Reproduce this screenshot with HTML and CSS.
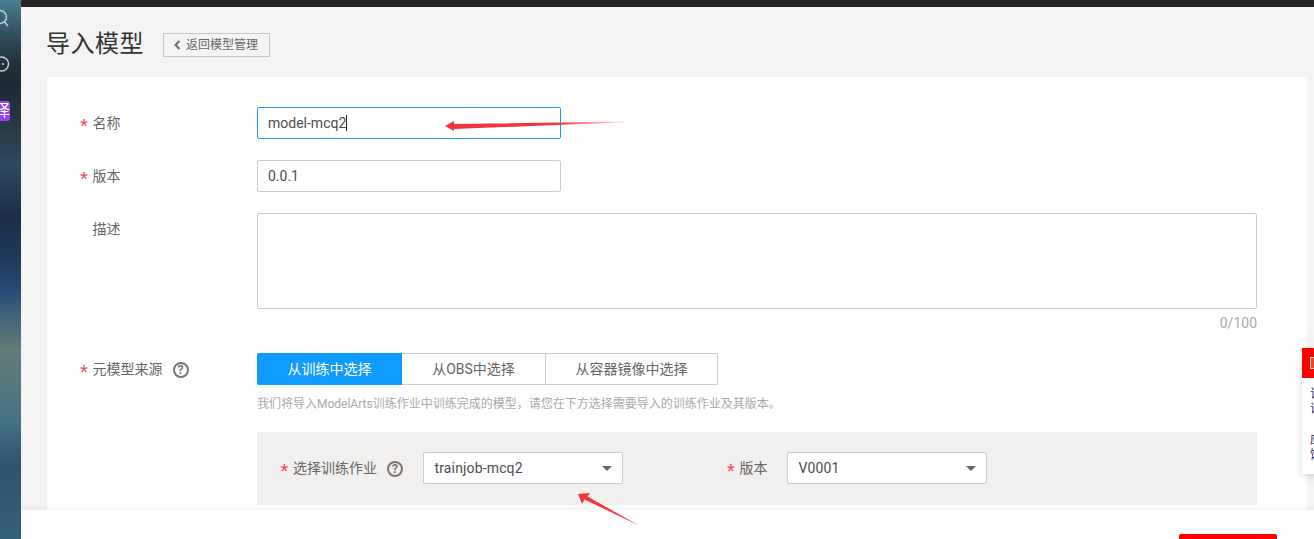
FILE: index.html
```html
<!DOCTYPE html>
<html lang="zh-CN">
<head>
<meta charset="utf-8">
<title>导入模型</title>
<link rel="stylesheet" href="styles.css">
</head>
<body>
<aside class="rail">
  <svg class="rail-icon search-icon" width="21" height="30" viewBox="0 0 21 30" aria-hidden="true">
    <circle cx="0" cy="17" r="6.5"/>
    <path d="M4.5 22 L8 26"/>
  </svg>
  <svg class="rail-icon clock-icon" width="21" height="18" viewBox="0 0 21 18" aria-hidden="true">
    <circle cx="1.5" cy="9" r="7"/>
    <circle class="dot" cx="3" cy="9" r="1"/>
  </svg>
  <div class="badge"><span>译</span></div>
</aside>
<div class="main">
  <div class="topbar"></div>
  <div class="content">
    <header class="page-head">
      <h1>导入模型</h1>
      <a class="back-btn"><svg width="7" height="10" viewBox="0 0 7 10" aria-hidden="true"><path d="M5.5 1 L1.5 5 L5.5 9"/></svg>返回模型管理</a>
    </header>
    <section class="card">
      <div class="row">
        <label class="label"><i class="star">*</i>名称</label>
        <div class="input focused">model-mcq2<span class="caret"></span></div>
      </div>
      <div class="row">
        <label class="label"><i class="star">*</i>版本</label>
        <div class="input">0.0.1</div>
      </div>
      <div class="row row-desc">
        <label class="label"><i class="star none"></i>描述</label>
        <div class="desc-wrap">
          <div class="textarea"></div>
          <div class="counter">0/100</div>
        </div>
      </div>
      <div class="row row-source">
        <label class="label"><i class="star">*</i>元模型来源<span class="help">?</span></label>
        <div class="source">
          <div class="tabs">
            <span class="tab tab-1 active">从训练中选择</span>
            <span class="tab tab-2">从OBS中选择</span>
            <span class="tab tab-3">从容器镜像中选择</span>
          </div>
          <p class="hint">我们将导入ModelArts训练作业中训练完成的模型，请您在下方选择需要导入的训练作业及其版本。</p>
          <div class="panel">
            <label class="label label-job"><i class="star">*</i>选择训练作业<span class="help">?</span></label>
            <div class="select">trainjob-mcq2<i class="tri"></i></div>
            <label class="label label-ver"><i class="star">*</i>版本</label>
            <div class="select">V0001<i class="tri"></i></div>
          </div>
        </div>
      </div>
    </section>
    <aside class="float-box">
      <div class="float-head"><i class="float-icon"></i></div>
      <div class="float-body">
        <p>该<br>议</p>
        <p>应<br>饭</p>
      </div>
    </aside>
  </div>
  <footer class="footer"><span class="primary-btn"></span></footer>
</div>
<svg class="marks" width="1314" height="539" viewBox="0 0 1314 539" aria-hidden="true">
  <defs>
    <linearGradient id="fade" gradientUnits="userSpaceOnUse" x1="445" y1="0" x2="625" y2="0">
      <stop offset="0" stop-color="#f5333a"/>
      <stop offset="0.6" stop-color="#f5333a"/>
      <stop offset="1" stop-color="#f5333a" stop-opacity="0.15"/>
    </linearGradient>
  </defs>
  <path fill="url(#fade)" d="M445 126 L454 121 L454 124 L625 121.5 L625 122.3 L454 129 L454 131 Z"/>
  <path fill="#f5333a" d="M578 494 L590 493 L587.5 496.5 L639 525.5 L584.5 499.5 L582 504 Z"/>
</svg>
</body>
</html>
```
FILE: styles.css
```css
* { box-sizing: border-box; }
html, body { margin: 0; height: 539px; }
body {
  display: flex;
  overflow: hidden;
  background: #fff;
  color: #666;
  font: 14px/20px Roboto, "Noto Sans CJK SC", sans-serif;
}
.rail {
  flex: 0 0 21px;
  height: 539px;
  overflow: hidden;
  display: flex;
  flex-direction: column;
  background: linear-gradient(180deg, #4b7f90 0, #3c6473 18px, #22333e 60px, #1a2a35 85px, #2a3b45 130px, #2c4a60 165px, #1c2e47 215px, #1f3a5c 260px, #254c73 290px, #3f6478 315px, #617b78 350px, #55797f 385px, #467385 420px, #2e5470 465px, #35607a 539px);
}
.rail-icon { fill: none; stroke: #c9d4d8; stroke-width: 1.4; display: block; flex: none; }
.clock-icon { margin-top: 25px; }
.clock-icon .dot { fill: #c9d4d8; stroke: none; }
.badge {
  flex: none;
  width: 10px;
  height: 20px;
  margin-top: 28px;
  overflow: hidden;
  background: #9d42f2;
  border-radius: 0 3px 3px 0;
  color: #fff;
  font-size: 16px;
  line-height: 20px;
}
.badge span { display: block; width: 16px; margin-left: -6px; }
.main {
  flex: 1;
  min-width: 0;
  height: 539px;
  display: flex;
  flex-direction: column;
}
.topbar { flex: 0 0 7px; background: #252525; }
.content {
  position: relative;
  flex: 0 0 503px;
  overflow: hidden;
  padding: 0 7px 0 26px;
  background: #f4f4f4;
}
.page-head {
  display: flex;
  align-items: center;
  height: 70px;
  padding-top: 6px;
}
.page-head h1 {
  margin: -3px 0 0 -1px;
  font-size: 24px;
  font-weight: 400;
  line-height: 32px;
  letter-spacing: .5px;
  color: #333;
}
.back-btn {
  display: flex;
  align-items: center;
  height: 24px;
  margin-left: 19px;
  padding: 0 11px 0 10px;
  border: 1px solid #c9c7c2;
  font-size: 12px;
  color: #666;
}
.back-btn svg { margin-right: 5px; fill: none; stroke: #666; stroke-width: 1.9; }
.card {
  height: 460px;
  padding: 30px 0 0 33px;
  background: #fff;
}
.row { display: flex; margin-bottom: 21px; }
.label {
  flex: 0 0 177px;
  display: flex;
  align-items: center;
  height: 32px;
  color: #666;
}
.star {
  flex: 0 0 12.5px;
  height: 28px;
  font-family: "Liberation Sans", sans-serif;
  font-style: normal;
  font-size: 20px;
  line-height: 20px;
  color: #f5414d;
  padding-top: 7px;
}
.input {
  display: flex;
  align-items: center;
  width: 304px;
  height: 32px;
  padding: 0 10px;
  border: 1px solid #d0cdc8;
  border-radius: 2px;
  color: #4d4d4d;
}
.input.focused { border-color: #1a9bfc; }
.caret { width: 1px; height: 16px; background: #222; margin-left: 0; }
.row-desc { margin-bottom: 0; }
.desc-wrap { width: 1000px; }
.textarea {
  height: 96px;
  border: 1px solid #d0cdc8;
  border-radius: 2px;
}
.counter {
  height: 44px;
  padding-top: 4px;
  text-align: right;
  color: #aaa;
}
.row-source { margin-bottom: 0; }
.help {
  display: flex;
  align-items: center;
  justify-content: center;
  width: 16px;
  height: 16px;
  margin: 1px 0 0 10px;
  border: 2px solid #7b7570;
  border-radius: 50%;
  color: #7b7570;
  font-size: 12px;
  font-weight: 700;
  line-height: 12px;
}
.source { width: 1000px; }
.tabs { display: flex; width: 461px; height: 32px; border: 1px solid #d0cdc8; border-left: 0; border-radius: 0 2px 2px 0; }
.tab {
  display: flex;
  align-items: center;
  justify-content: center;
  margin: -1px 0;
  color: #666;
}
.tab-1 { flex: 0 0 145px; }
.tab-2 { flex: 0 0 143px; }
.tab-3 { flex: 1; border-left: 1px solid #d0cdc8; }
.tab.active { background: #0f9bff; color: #fff; border-radius: 2px 0 0 2px; }
.hint {
  margin: 0;
  padding-top: 9px;
  height: 47px;
  font-size: 12px;
  line-height: 20px;
  color: #aaa;
}
.panel {
  display: flex;
  height: 73px;
  padding: 20px 0 0 23.5px;
  background: #f1f0ee;
}
.label-job { flex: 0 0 142.5px; }
.label-ver { flex: 0 0 60px; margin-left: 104px; }
.select {
  position: relative;
  display: flex;
  align-items: center;
  width: 200px;
  height: 32px;
  padding: 0 10.5px;
  border: 1px solid #d0cdc8;
  border-radius: 2px;
  background: #fff;
  color: #4d4d4d;
  letter-spacing: .15px;
}
.tri {
  position: absolute;
  right: 10px;
  top: 13px;
  width: 0;
  height: 0;
  border-style: solid;
  border-width: 5px 5.5px 0;
  border-color: #666 transparent transparent;
}
.float-box {
  position: absolute;
  left: 1281px;
  top: 341px;
  width: 60px;
  height: 126px;
  background: #fff;
  box-shadow: 0 2px 8px rgba(0,0,0,.15);
}
.float-head { height: 30px; padding: 9px 0 0 8px; background: #f00; }
.float-icon { display: block; width: 12px; height: 12px; border: 1px solid #ffd9b0; background: #e8492c; }
.float-body { padding: 9px 0 0 8px; font-size: 12px; line-height: 15px; color: #32206a; }
.float-body p { margin: 0 0 16px; }
.footer {
  flex: 0 0 29px;
  overflow: hidden;
  padding: 24px 0 0 1158px;
  background: #fff;
  box-shadow: 0 -2px 4px rgba(0,0,0,.05);
  position: relative;
}
.primary-btn { display: block; width: 98px; height: 32px; background: #f00; border-radius: 2px; }
.marks { position: absolute; left: 0; top: 0; pointer-events: none; }
```
